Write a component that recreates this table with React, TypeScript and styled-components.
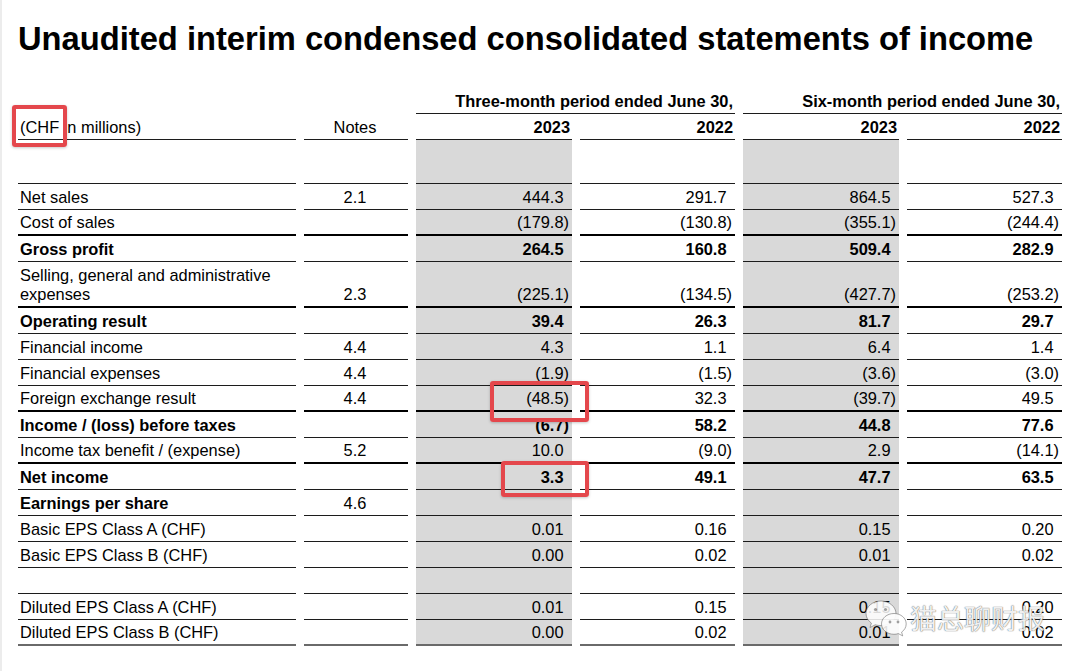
import React from "react";
import styled, { createGlobalStyle, css } from "styled-components";

const GlobalStyle = createGlobalStyle`
  html, body { margin: 0; padding: 0; background: #ffffff; }
  body {
    font-family: "Liberation Sans", Arial, sans-serif;
    color: #000000;
  }
`;

type Rule = "none" | "thin" | "thick" | "end";

const ruleCss = (r: Rule) => {
  switch (r) {
    case "thin":
      return css`border-bottom: 1px solid #1c1c1c;`;
    case "thick":
      return css`border-bottom: 2px solid #000000;`;
    case "end":
      return css`border-bottom: 2px solid #6a6a6a;`;
    default:
      return css`border-bottom: none;`;
  }
};

const Page = styled.div`
  position: relative;
  width: 1080px;
  height: 671px;
  box-sizing: border-box;
  padding: 20px 0 0 18px;
  box-shadow: inset 2px 0 0 #ececec;
  overflow: hidden;
`;

const Title = styled.h1`
  margin: 0 0 30px 0;
  font-size: 32.7px;
  line-height: 38px;
  font-weight: 700;
  white-space: nowrap;
`;

const Table = styled.div`
  display: flex;
  flex-direction: column;
`;

const Row = styled.div<{ $h: number }>`
  display: grid;
  grid-template-columns: 278px 104px 156px 155px 156px 155px;
  column-gap: 8px;
  height: ${(p) => p.$h}px;
`;

const Cell = styled.div<{
  $rule: Rule;
  $align: "left" | "center" | "right";
  $shade?: boolean;
  $bold?: boolean;
  $span?: number;
}>`
  box-sizing: border-box;
  height: 100%;
  display: flex;
  align-items: flex-end;
  justify-content: ${(p) =>
    p.$align === "left" ? "flex-start" : p.$align === "center" ? "center" : "flex-end"};
  text-align: ${(p) => p.$align};
  padding: 0 ${(p) => (p.$align === "right" ? 3 : 2)}px 2px ${(p) => (p.$align === "left" ? 2 : 0)}px;
  font-size: 16.4px;
  line-height: 19px;
  font-weight: ${(p) => (p.$bold ? 700 : 400)};
  background: ${(p) => (p.$shade ? "#d9d9d9" : "transparent")};
  ${(p) => (p.$span ? css`grid-column: span ${p.$span};` : "")}
  ${(p) => ruleCss(p.$rule)}
`;

const HeadCell = styled(Cell)`
  padding-right: 2px;
`;

const Amount = styled.span<{ $hang: boolean }>`
  padding-right: ${(p) => (p.$hang ? "0.333em" : "0")};
`;

const Mark = styled.div<{ $x: number; $y: number; $w: number; $h: number }>`
  position: absolute;
  left: ${(p) => p.$x}px;
  top: ${(p) => p.$y}px;
  width: ${(p) => p.$w}px;
  height: ${(p) => p.$h}px;
  box-sizing: border-box;
  border: 4px solid #e4474c;
  border-radius: 3px;
  box-shadow: 0 1px 3px rgba(0, 0, 0, 0.22);
  pointer-events: none;
`;

const Watermark = styled.div`
  position: absolute;
  left: 864px;
  top: 599px;
  display: flex;
  align-items: center;
  gap: 2px;
  opacity: 0.92;
  pointer-events: none;
`;

const WatermarkText = styled.span`
  font-family: "Noto Sans CJK SC", "Noto Sans", sans-serif;
  font-size: 27px;
  line-height: 34px;
  font-weight: 400;
  color: rgba(255, 255, 255, 0.92);
  text-shadow: 0 0 1px rgba(60, 60, 60, 0.7), 0 0 1px rgba(60, 60, 60, 0.7);
  letter-spacing: 0;
`;

type Data = {
  label: string;
  bold?: boolean;
  note?: string;
  values: string[];
  rule: Rule;
  h?: number;
};

const rows: Data[] = [
  { label: "", values: ["", "", "", ""], rule: "thin", h: 44 },
  { label: "Net sales", note: "2.1", values: ["444.3", "291.7", "864.5", "527.3"], rule: "thin" },
  { label: "Cost of sales", values: ["(179.8)", "(130.8)", "(355.1)", "(244.4)"], rule: "thick" },
  { label: "Gross profit", bold: true, values: ["264.5", "160.8", "509.4", "282.9"], rule: "thin" },
  {
    label: "Selling, general and administrative expenses",
    note: "2.3",
    values: ["(225.1)", "(134.5)", "(427.7)", "(253.2)"],
    rule: "thick",
    h: 46,
  },
  { label: "Operating result", bold: true, values: ["39.4", "26.3", "81.7", "29.7"], rule: "thin" },
  { label: "Financial income", note: "4.4", values: ["4.3", "1.1", "6.4", "1.4"], rule: "thin" },
  { label: "Financial expenses", note: "4.4", values: ["(1.9)", "(1.5)", "(3.6)", "(3.0)"], rule: "thin" },
  { label: "Foreign exchange result", note: "4.4", values: ["(48.5)", "32.3", "(39.7)", "49.5"], rule: "thick" },
  { label: "Income / (loss) before taxes", bold: true, values: ["(6.7)", "58.2", "44.8", "77.6"], rule: "thin" },
  { label: "Income tax benefit / (expense)", note: "5.2", values: ["10.0", "(9.0)", "2.9", "(14.1)"], rule: "thick" },
  { label: "Net income", bold: true, values: ["3.3", "49.1", "47.7", "63.5"], rule: "thin" },
  { label: "Earnings per share", bold: true, note: "4.6", values: ["", "", "", ""], rule: "thin" },
  { label: "Basic EPS Class A (CHF)", values: ["0.01", "0.16", "0.15", "0.20"], rule: "thin" },
  { label: "Basic EPS Class B (CHF)", values: ["0.00", "0.02", "0.01", "0.02"], rule: "thin" },
  { label: "", values: ["", "", "", ""], rule: "thin" },
  { label: "Diluted EPS Class A (CHF)", values: ["0.01", "0.15", "0.15", "0.20"], rule: "thin" },
  { label: "Diluted EPS Class B (CHF)", values: ["0.00", "0.02", "0.01", "0.02"], rule: "end" },
];

const WeChatIcon = () => (
  <svg width="44" height="38" viewBox="0 0 44 38" fill="none">
    <path
      d="M17 2C8.7 2 2 7.6 2 14.5c0 3.9 2.1 7.3 5.4 9.6L6 28.5l5.2-2.7c1.8.5 3.7.8 5.8.8 8.3 0 15-5.6 15-12.1S25.3 2 17 2Z"
      fill="rgba(255,255,255,0.92)"
      stroke="rgba(90,90,90,0.55)"
      strokeWidth="1"
    />
    <circle cx="11.5" cy="10.5" r="1.6" fill="rgba(90,90,90,0.6)" />
    <circle cx="21.5" cy="10.5" r="1.6" fill="rgba(90,90,90,0.6)" />
    <path
      d="M30 14.5c-7 0-12.5 4.7-12.5 10.4S23 35.3 30 35.3c1.5 0 3-.2 4.3-.7l4.4 2.3-1.1-3.8c2.8-1.9 4.6-4.8 4.6-8.2 0-5.7-5.3-10.4-12.2-10.4Z"
      fill="rgba(255,255,255,0.95)"
      stroke="rgba(90,90,90,0.55)"
      strokeWidth="1"
    />
    <circle cx="26" cy="23" r="1.4" fill="rgba(90,90,90,0.6)" />
    <circle cx="34" cy="23" r="1.4" fill="rgba(90,90,90,0.6)" />
  </svg>
);

const shadeCols = [true, false, true, false];

export default function App() {
  return (
    <>
      <GlobalStyle />
      <Page>
        <Title>Unaudited interim condensed consolidated statements of income</Title>
        <Table>
          <Row $h={26}>
            <Cell $rule="none" $align="left" />
            <Cell $rule="none" $align="center" />
            <HeadCell $rule="thin" $align="right" $bold $span={2}>
              Three-month period ended June 30,
            </HeadCell>
            <HeadCell $rule="thin" $align="right" $bold $span={2}>
              Six-month period ended June 30,
            </HeadCell>
          </Row>
          <Row $h={26}>
            <Cell $rule="thin" $align="left">(CHF in millions)</Cell>
            <Cell $rule="thin" $align="center">Notes</Cell>
            {["2023", "2022", "2023", "2022"].map((y, i) => (
              <HeadCell key={i} $rule="thin" $align="right" $bold>
                {y}
              </HeadCell>
            ))}
          </Row>
          {rows.map((r, i) => (
            <Row key={i} $h={r.h ?? 26}>
              <Cell $rule={r.rule} $align="left" $bold={r.bold}>
                {r.label}
              </Cell>
              <Cell $rule={r.rule} $align="center">
                {r.note ?? ""}
              </Cell>
              {r.values.map((v, j) => (
                <Cell key={j} $rule={r.rule} $align="right" $bold={r.bold} $shade={shadeCols[j]}>
                  {v && <Amount $hang={!v.startsWith("(")}>{v}</Amount>}
                </Cell>
              ))}
            </Row>
          ))}
        </Table>
        <Mark $x={12} $y={105} $w={55} $h={42} />
        <Mark $x={490} $y={381} $w={99} $h={41} />
        <Mark $x={501} $y={461} $w={88} $h={36} />
        <Watermark>
          <WeChatIcon />
          <WatermarkText>猫总聊财报</WatermarkText>
        </Watermark>
      </Page>
    </>
  );
}
